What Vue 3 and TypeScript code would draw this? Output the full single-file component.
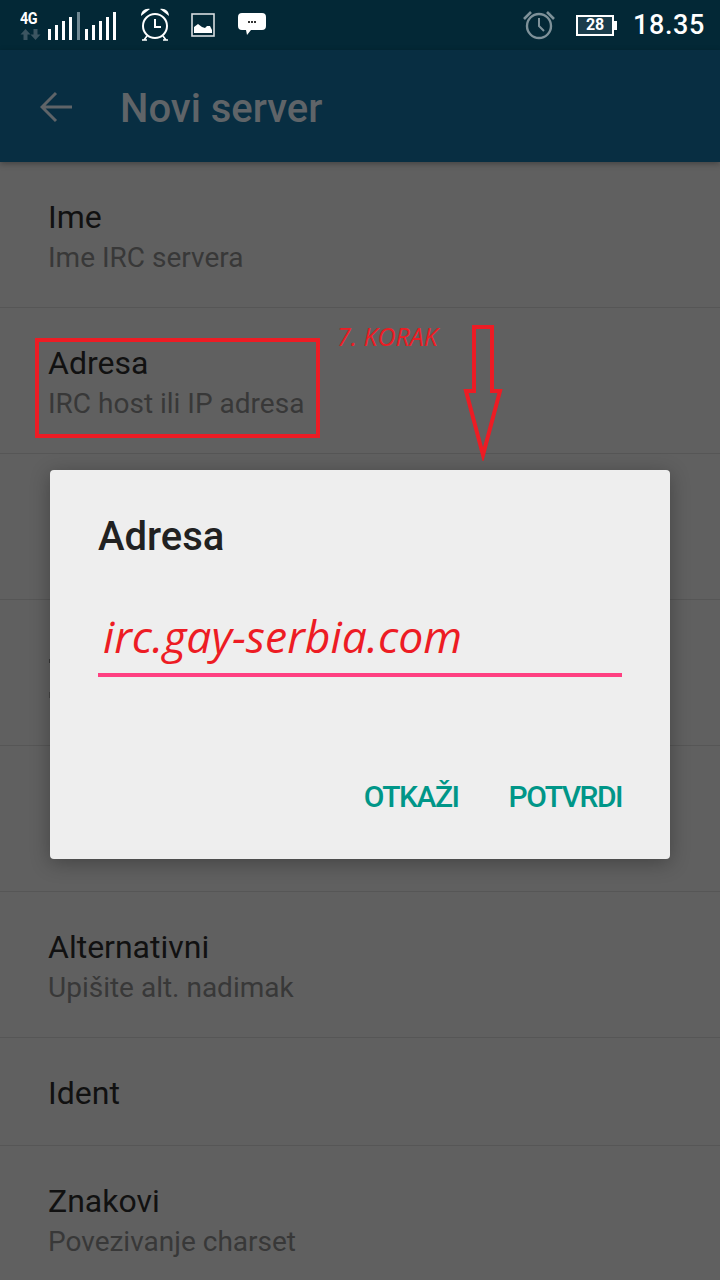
<template>
  <div class="screen">
    <div class="status-bar">
      <div class="net">
        <span class="net-label">4G</span>
        <svg class="net-arrows" width="21" height="11" viewBox="0 0 21 11">
          <path d="M5.5 0 L10.5 5.5 H7.5 V11 H3.5 V5.5 H0.5 Z" fill="#3c5561" />
          <path d="M15.5 11 L20.5 5.5 H17.5 V0 H13.5 V5.5 H10.5 Z" fill="#3c5561" />
        </svg>
      </div>
      <svg class="signal" width="70" height="28" viewBox="0 0 70 28">
        <rect v-for="bar in signalBars" :key="bar.x" :x="bar.x" :y="28 - bar.h" width="3" :height="bar.h" :fill="bar.color" />
      </svg>
      <svg class="alarm-on" width="30" height="34" viewBox="0 0 30 34">
        <circle cx="15" cy="18" r="12" fill="none" stroke="#fff" stroke-width="2" />
        <path d="M15 11 V19 H21" fill="none" stroke="#fff" stroke-width="2" />
        <path d="M1 8 C1 3 5 0 10 1 Z M29 8 C29 3 25 0 20 1 Z" fill="#fff" />
        <path d="M7 28 L4 32 M23 28 L26 32 M2 32 H7 M23 32 H28" fill="none" stroke="#fff" stroke-width="1.6" />
      </svg>
      <svg class="picture" width="24" height="24" viewBox="0 0 24 24">
        <rect x="1" y="1" width="22" height="22" fill="none" stroke="#d8dde0" stroke-width="1.6" />
        <path d="M3 20 V14 L7 11 L11 14 L14 15 L16 13 L19 13 L21 17 V20 Z" fill="#fff" />
      </svg>
      <svg class="chat" width="28" height="24" viewBox="0 0 28 24">
        <path d="M4 1 H24 Q28 1 28 5 V14 Q28 18 24 18 H13 L9 23 L8 18 H4 Q0 18 0 14 V5 Q0 1 4 1 Z" fill="#fff" />
        <rect x="10" y="9" width="2" height="2" fill="#333" />
        <rect x="13" y="9" width="2" height="2" fill="#333" />
        <rect x="16" y="9" width="2" height="2" fill="#333" />
      </svg>
      <div class="spacer"></div>
      <svg class="alarm-off" width="32" height="30" viewBox="0 0 32 30">
        <circle cx="16" cy="16" r="12" fill="none" stroke="#7e9199" stroke-width="2.4" />
        <path d="M16 8 V16 L21 21" fill="none" stroke="#7e9199" stroke-width="2" />
        <path d="M1 9 L8 2 M31 9 L24 2" fill="none" stroke="#7e9199" stroke-width="2.6" />
      </svg>
      <div class="battery">
        <span class="battery-level">28</span>
      </div>
      <span class="clock">18.35</span>
    </div>

    <header class="app-bar">
      <svg class="back" width="33" height="32" viewBox="0 0 33 32">
        <path d="M32 16 H4 M16 2 L2 16 L16 30" fill="none" stroke="#5f6468" stroke-width="3" />
      </svg>
      <h1 class="bar-title">Novi server</h1>
    </header>

    <div class="list">
      <div v-for="(row, i) in rows" :key="i" class="row" :class="{ single: row.single }">
        <div v-if="row.title" class="row-title">{{ row.title }}</div>
        <div v-if="row.sub" class="row-sub">{{ row.sub }}</div>
      </div>
    </div>

    <!-- rubovi slova koja proviruju ispod dijaloga -->
    <div class="peek peek-top"></div>
    <div class="peek peek-bottom"></div>

    <!-- crvene oznake preko snimka ekrana -->
    <div class="mark-box"></div>
    <span class="step-label">7. KORAK</span>
    <svg class="mark-arrow" width="40" height="136" viewBox="0 0 40 136">
      <path d="M11 2 H29 V66 H37 L20 130 L3 66 H11 Z" fill="none" stroke="#ed1c24" stroke-width="4" />
    </svg>

    <div class="dialog">
      <h2 class="dialog-title">Adresa</h2>
      <div class="field">
        <span class="field-value">irc.gay-serbia.com</span>
      </div>
      <div class="actions">
        <span class="action">OTKAŽI</span>
        <span class="action">POTVRDI</span>
      </div>
    </div>
  </div>
</template>

<script setup lang="ts">
interface Row {
  title?: string
  sub?: string
  single?: boolean
}

// the three middle rows sit behind the dialog, their text can't be read
const rows: Row[] = [
  { title: 'Ime', sub: 'Ime IRC servera' },
  { title: 'Adresa', sub: 'IRC host ili IP adresa' },
  {},
  {},
  {},
  { title: 'Alternativni', sub: 'Upišite alt. nadimak' },
  { title: 'Ident', single: true },
  { title: 'Znakovi', sub: 'Povezivanje charset' }
]

const heights = [11, 15, 19, 23]
const signalBars = [
  ...heights.map((h, i) => ({ x: i * 7, h, color: '#fff' })),
  { x: 29, h: 28, color: '#6f8791' },
  ...heights.map((h, i) => ({ x: 37 + i * 7, h, color: '#fff' })),
  { x: 65, h: 28, color: '#fff' }
]
</script>

<style>
html,
body {
  margin: 0;
  background: #606060;
}
</style>

<style scoped>
.screen {
  position: relative;
  width: 720px;
  height: 1280px;
  overflow: hidden;
  background: #606060;
  font-family: Roboto, "Liberation Sans", sans-serif;
}

.status-bar {
  height: 50px;
  box-sizing: border-box;
  padding: 0 15px 0 20px;
  display: flex;
  align-items: center;
  background: #032836;
  color: #fff;
}

.net {
  width: 22px;
  display: flex;
  flex-direction: column;
  align-items: flex-start;
  margin-top: 1px;
}

.net-label {
  font-size: 16px;
  font-weight: 700;
  line-height: 14px;
  letter-spacing: -0.5px;
  transform: scaleX(0.9);
  transform-origin: left;
}

.net-arrows {
  margin-top: 3px;
}

.signal {
  margin-left: 6px;
  margin-top: 1px;
}

.alarm-on {
  margin-left: 22px;
}

.picture {
  margin-left: 21px;
}

.chat {
  margin-left: 23px;
  margin-top: -2px;
}

.spacer {
  flex: 1;
}

.alarm-off {
  margin-right: 21px;
}

.battery {
  position: relative;
  width: 38px;
  height: 21px;
  box-sizing: border-box;
  border: 2px solid #fff;
  display: flex;
  align-items: center;
  justify-content: center;
  margin-right: 20px;
  background: #1b3d4b;
}

.battery::after {
  content: "";
  position: absolute;
  right: -5px;
  top: 4px;
  width: 3px;
  height: 9px;
  background: #fff;
}

.battery-level {
  font-size: 16px;
  font-weight: 700;
  line-height: 1;
}

.clock {
  font-size: 27px;
  font-weight: 500;
  letter-spacing: 0.6px;
  margin-left: -1px;
}

.app-bar {
  height: 112px;
  box-sizing: border-box;
  padding: 2px 0 0 40px;
  display: flex;
  align-items: center;
  background: #082e42;
  box-shadow: 0 2px 6px rgba(0, 0, 0, 0.3);
  position: relative;
}

.bar-title {
  margin: 2px 0 0 47px;
  font-size: 40px;
  font-weight: 500;
  color: #5f6468;
}

.row {
  height: 146px;
  box-sizing: border-box;
  padding: 36px 48px 0;
  border-bottom: 1px solid #565656;
}

.row.single {
  height: 108px;
}

.row-title {
  font-size: 32px;
  line-height: 38px;
  color: #111;
}

.row-sub {
  margin-top: 3px;
  font-size: 28px;
  line-height: 38px;
  color: #383838;
}

.peek {
  position: absolute;
  left: 49px;
  width: 1px;
  background: #3a3a3a;
}

.peek-top {
  top: 659px;
  height: 4px;
}

.peek-bottom {
  top: 692px;
  height: 6px;
  background: #484848;
}

.mark-box {
  position: absolute;
  left: 35px;
  top: 338px;
  width: 285px;
  height: 100px;
  box-sizing: border-box;
  border: 4px solid #ed1c24;
}

.step-label {
  position: absolute;
  left: 337px;
  top: 322px;
  font-family: "Open Sans", sans-serif;
  font-style: italic;
  font-size: 25px;
  line-height: 28px;
  color: #ed1c24;
}

.mark-arrow {
  position: absolute;
  left: 463px;
  top: 325px;
}

.dialog {
  position: absolute;
  left: 50px;
  top: 470px;
  width: 620px;
  height: 389px;
  box-sizing: border-box;
  padding: 44px 48px 0;
  background: #eee;
  border-radius: 4px;
  box-shadow: 0 4px 20px rgba(0, 0, 0, 0.3);
}

.dialog-title {
  margin: 0;
  font-size: 40px;
  line-height: 46px;
  font-weight: 500;
  color: #212121;
}

.field {
  margin-top: 49px;
  height: 68px;
  box-sizing: border-box;
  border-bottom: 4px solid #ff4081;
  padding-left: 5px;
}

.field-value {
  font-family: "Open Sans", sans-serif;
  font-style: italic;
  font-size: 44.5px;
  line-height: 54px;
  color: #ed1c24;
}

.actions {
  margin-top: 102px;
  display: flex;
  justify-content: flex-end;
  gap: 50px;
}

.action {
  font-size: 30px;
  line-height: 36px;
  font-weight: 500;
  letter-spacing: -1.5px;
  color: #009688;
}
</style>
